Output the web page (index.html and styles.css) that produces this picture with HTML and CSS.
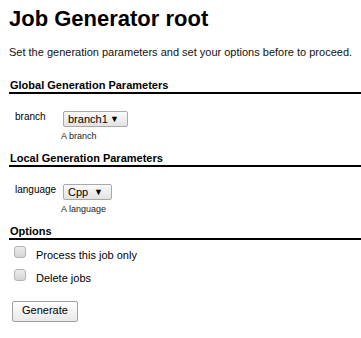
FILE: index.html
```html
<!DOCTYPE html>
<html lang="en">
<head>
  <meta charset="UTF-8">
  <title>Job Generator root</title>
  <link rel="stylesheet" href="styles.css">
</head>
<body>

  <h1 class="page-title">Job Generator root</h1>
  <p class="intro">Set the generation parameters and set your options before to proceed.</p>

  <h3 class="section-head">Global Generation Parameters</h3>
  <div class="param-row">
    <label class="param-label" for="branch">branch</label>
    <div class="param-field">
      <div class="select-box branch-select" id="branch"><span>branch1</span><span class="arrow">&#9660;</span></div>
      <div class="param-help">A branch</div>
    </div>
  </div>

  <h3 class="section-head">Local Generation Parameters</h3>
  <div class="param-row">
    <label class="param-label" for="language">language</label>
    <div class="param-field">
      <div class="select-box lang-select" id="language"><span>Cpp</span><span class="arrow">&#9660;</span></div>
      <div class="param-help">A language</div>
    </div>
  </div>

  <h3 class="section-head">Options</h3>
  <div class="option-row first">
    <span class="check-box"></span>
    <span class="option-text">Process this job only</span>
  </div>
  <div class="option-row">
    <span class="check-box"></span>
    <span class="option-text">Delete jobs</span>
  </div>

  <button class="generate-btn">Generate</button>

</body>
</html>
```

FILE: styles.css
```css
body {
  font-family: 'Liberation Sans', Arial, sans-serif;
  margin: 0;
  padding: 0 0 0 9px;
  color: #000;
  background-color: #fff;
}

.page-title {
  font-size: 22px;
  margin: 6px 0 0 0;
  line-height: 26px;
}

.intro {
  font-size: 11px;
  line-height: 13px;
  margin: 14px 0 0 0;
  color: #111;
}

.section-head {
  font-size: 11px;
  font-weight: bold;
  line-height: 13px;
  margin: 20px 0 0 0;
  padding: 0 0 0 1px;
  border-bottom: 2px solid #000;
}

.param-row + .section-head {
  margin-top: 10px;
}

.param-row {
  display: flex;
  align-items: flex-start;
  margin-top: 17px;
  padding-left: 6px;
}

.param-label {
  font-size: 10px;
  line-height: 12px;
  width: 48px;
}

.param-field {
  display: flex;
  flex-direction: column;
  align-items: flex-start;
}

.select-box {
  display: flex;
  align-items: center;
  box-sizing: border-box;
  height: 16px;
  font-size: 11px;
  line-height: 12px;
  border: 1px solid #a9a9a9;
  border-radius: 2px;
  background: linear-gradient(#fbfbfb, #e2e2e2);
  padding: 0 8px 0 4px;
}

.branch-select {
  width: 65px;
}

.lang-select {
  width: 49px;
}

.arrow {
  font-size: 9px;
  margin-left: auto;
}

.param-help {
  font-size: 9px;
  line-height: 11px;
  margin: 4px 0 0 -2px;
  color: #222;
}

.option-row {
  display: flex;
  align-items: flex-start;
  margin-top: 7px;
  padding-left: 5px;
}

.option-row.first {
  margin-top: 6px;
}

.check-box {
  box-sizing: border-box;
  width: 12px;
  height: 12px;
  border: 1px solid #b3b3b3;
  border-radius: 3px;
  background: linear-gradient(#ececec, #d4d4d4);
  margin-right: 10px;
}

.option-text {
  font-size: 11px;
  line-height: 13px;
  margin-top: 3px;
}

.generate-btn {
  display: block;
  font-family: 'Liberation Sans', Arial, sans-serif;
  font-size: 11px;
  line-height: 13px;
  color: #000;
  margin: 16px 0 0 3px;
  padding: 2px 9px 4px 9px;
  border: 1px solid #a0a0a0;
  border-radius: 2px;
  background: linear-gradient(#ffffff, #e8e8e8);
}
```
